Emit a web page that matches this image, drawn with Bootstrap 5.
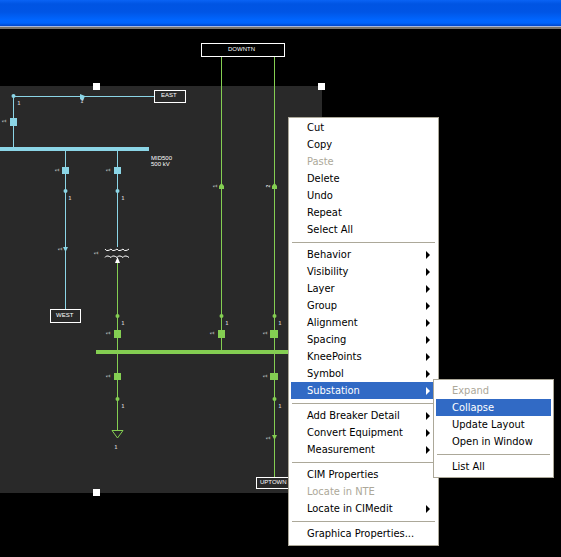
<!DOCTYPE html>
<html lang="en">
<head>
<meta charset="utf-8">
<meta name="viewport" content="width=device-width, initial-scale=1">
<title>Substation diagram</title>
<link href="https://cdn.jsdelivr.net/npm/bootstrap@5.3.0/dist/css/bootstrap.min.css" rel="stylesheet">
<style>
  body { background: #000; font-family: "DejaVu Sans Condensed", "Noto Sans", sans-serif; }
  .title-strip {
    height: 29px;
    background: linear-gradient(#0a63f5 0, #0054e3 4px, #0055e5 12px, #0066ff 20px, #0064fb 23px, #0046c8 26px);
    border-bottom: 2px solid #77736a;
    box-shadow: inset 0 -1px #a9b8dc;
  }
  .diagram { display: block; }
  .diagram text { font-family: "Liberation Sans", Arial, sans-serif; font-size: 6px; fill: #fff; }
  .diagram .tick { font-size: 5px; fill: #ccc; text-anchor: middle; font-weight: bold; }
  .ctx-menu {
    --bs-dropdown-min-width: 0;
    --bs-dropdown-padding-x: 2px;
    --bs-dropdown-padding-y: 2px;
    --bs-dropdown-font-size: 11px;
    --bs-dropdown-bg: #fff;
    --bs-dropdown-color: #000;
    --bs-dropdown-border-color: #aca899;
    --bs-dropdown-border-radius: 0;
    --bs-dropdown-divider-margin-y: 4px;
    --bs-dropdown-item-padding-x: 16px;
    --bs-dropdown-item-padding-y: 0;
    --bs-dropdown-link-color: #000;
    --bs-dropdown-link-hover-color: #fff;
    --bs-dropdown-link-hover-bg: #316ac5;
    --bs-dropdown-link-active-bg: #316ac5;
    --bs-dropdown-link-disabled-color: #aca899;
    line-height: 17px;
  }
  .ctx-menu .dropdown-item { height: 17px; padding-right: 6px; }
  .ctx-menu .dropdown-divider { height: 0; margin: 4px 1px 3px; border-top: 1px solid #aca899; opacity: 1; }
  .main-menu { left: 288px; top: 88px; width: 151px; padding-top: 1px; padding-bottom: 3px; }
  .sub-menu { left: 142px; top: -3px; width: 121px; }
  .has-sub::after { content: ""; border: 4px solid transparent; border-left-color: currentColor; border-right: 0; }
</style>
</head>
<body class="min-vh-100 overflow-hidden">
<header class="title-strip"></header>
<main class="position-relative">
  <svg class="diagram" width="322" height="470" viewBox="0 29 322 470" overflow="visible" role="img" aria-label="One-line diagram">
    <rect y="86" width="322" height="407" fill="#292929"/>
    <!-- 500 kV side -->
    <g stroke="#8bd5e6" fill="none">
      <path d="M13.500 121V96.500H154M13.500 96V147M65.500 150V309M117.500 150V247"/>
      <path d="M0 149H149" stroke-width="4"/>
    </g>
    <g fill="#8bd5e6">
      <path d="M10 118h7v8h-7zM62 167h7v7h-7zM114 167h7v7h-7zM80 94l5 2-2 5-3-2zM63 247h5l-2.500 5z"/>
      <circle cx="13.500" cy="96" r="2"/><circle cx="65.500" cy="191" r="2"/><circle cx="117.500" cy="191" r="2"/>
    </g>
    <!-- low-voltage side -->
    <g stroke="#84ce52" fill="none">
      <path d="M117.500 259V430M221.500 57V351M274.500 57V477"/>
      <path d="M96 352H300" stroke-width="4"/>
      <path d="M112 430.500H123L117.500 438z" fill="#292929"/>
    </g>
    <g fill="#84ce52">
      <path d="M114 330h7v8h-7zM218 330h7v8h-7zM270 330h8v8h-8zM114 373h7v7h-7zM270 373h8v7h-8zM219 189v-3l2.500-3 2.500 3v3zM272 189v-3l2.500-3 2.500 3v3zM272 435h5l-2.500 5z"/>
      <circle cx="117.500" cy="316" r="2"/><circle cx="221.500" cy="316" r="2"/><circle cx="274.500" cy="316" r="2"/>
      <circle cx="117.500" cy="399" r="2"/><circle cx="274.500" cy="399" r="2"/>
    </g>
    <!-- transformer -->
    <path d="M105 249q1 2 3 1.500t3-1.500q1 2 3 1.500t3-1.500q1 2 3 1.500t3-1.500q1 2 3 1.500t3-1.500M105 257.500q1-2 3-1.500t3 1.500q1-2 3-1.500t3 1.500q1-2 3-1.500t3 1.500q1-2 3-1.500t3 1.500" fill="none" stroke="#fff"/>
    <path d="M115 263l2.500-6 2.500 6z" fill="#fff"/>
    <g fill="none" stroke="#fff">
      <rect x="201.500" y="43.500" width="83" height="13" fill="#000"/>
      <rect x="154.500" y="90.500" width="31" height="12"/>
      <rect x="50.500" y="309.500" width="30" height="13"/>
      <rect x="256.500" y="477.500" width="42" height="11"/>
    </g>
    <text x="228" y="51">DOWNTN</text>
    <text x="161" y="97">EAST</text>
    <text x="56" y="317">WEST</text>
    <text x="260" y="484">UPTOWN</text>
    <text x="151" y="160">MID500</text>
    <text x="151" y="166">500 kV</text>
    <g>
      <text class="tick" x="19" y="105">1</text><text class="tick" x="82" y="103">1</text>
      <text class="tick" x="70" y="200">1</text><text class="tick" x="123" y="200">1</text>
      <text class="tick" x="123" y="325">1</text><text class="tick" x="227" y="325">1</text><text class="tick" x="280" y="325">1</text>
      <text class="tick" x="123" y="408">1</text><text class="tick" x="280" y="408">1</text><text class="tick" x="116" y="449">1</text>
      <text class="tick" transform="translate(6 121)rotate(-90)">1</text>
      <text class="tick" transform="translate(59 170)rotate(-90)">1</text>
      <text class="tick" transform="translate(110 170)rotate(-90)">1</text>
      <text class="tick" transform="translate(62 249)rotate(-90)">1</text>
      <text class="tick" transform="translate(98 253)rotate(-90)">1</text>
      <text class="tick" transform="translate(110 333)rotate(-90)">1</text>
      <text class="tick" transform="translate(214 333)rotate(-90)">1</text>
      <text class="tick" transform="translate(267 333)rotate(-90)">1</text>
      <text class="tick" transform="translate(110 376)rotate(-90)">1</text>
      <text class="tick" transform="translate(267 376)rotate(-90)">1</text>
      <text class="tick" transform="translate(270 438)rotate(-90)">1</text>
      <text class="tick" transform="translate(217 186)rotate(-90)">1</text>
      <text class="tick" transform="translate(270 186)rotate(-90)">2</text>
    </g>
    <!-- selection handles -->
    <path d="M93 83h7v7h-7zM318 83h7v7h-7zM93 489h7v7h-7z" fill="#fff"/>
  </svg>

  <ul class="dropdown-menu ctx-menu main-menu show">
    <li><button type="button" class="dropdown-item">Cut</button></li>
    <li><button type="button" class="dropdown-item">Copy</button></li>
    <li><button type="button" class="dropdown-item" disabled>Paste</button></li>
    <li><button type="button" class="dropdown-item">Delete</button></li>
    <li><button type="button" class="dropdown-item">Undo</button></li>
    <li><button type="button" class="dropdown-item">Repeat</button></li>
    <li><button type="button" class="dropdown-item">Select All</button></li>
    <li><hr class="dropdown-divider"></li>
    <li><button type="button" class="dropdown-item has-sub d-flex justify-content-between align-items-center">Behavior</button></li>
    <li><button type="button" class="dropdown-item has-sub d-flex justify-content-between align-items-center">Visibility</button></li>
    <li><button type="button" class="dropdown-item has-sub d-flex justify-content-between align-items-center">Layer</button></li>
    <li><button type="button" class="dropdown-item has-sub d-flex justify-content-between align-items-center">Group</button></li>
    <li><button type="button" class="dropdown-item has-sub d-flex justify-content-between align-items-center">Alignment</button></li>
    <li><button type="button" class="dropdown-item has-sub d-flex justify-content-between align-items-center">Spacing</button></li>
    <li><button type="button" class="dropdown-item has-sub d-flex justify-content-between align-items-center">KneePoints</button></li>
    <li><button type="button" class="dropdown-item has-sub d-flex justify-content-between align-items-center">Symbol</button></li>
    <li class="position-relative">
      <button type="button" class="dropdown-item active has-sub d-flex justify-content-between align-items-center" aria-expanded="true">Substation</button>
      <ul class="dropdown-menu ctx-menu sub-menu show">
        <li><button type="button" class="dropdown-item" disabled>Expand</button></li>
        <li><button type="button" class="dropdown-item active">Collapse</button></li>
        <li><button type="button" class="dropdown-item">Update Layout</button></li>
        <li><button type="button" class="dropdown-item">Open in Window</button></li>
        <li><hr class="dropdown-divider"></li>
        <li><button type="button" class="dropdown-item">List All</button></li>
      </ul>
    </li>
    <li><hr class="dropdown-divider"></li>
    <li><button type="button" class="dropdown-item has-sub d-flex justify-content-between align-items-center">Add Breaker Detail</button></li>
    <li><button type="button" class="dropdown-item has-sub d-flex justify-content-between align-items-center">Convert Equipment</button></li>
    <li><button type="button" class="dropdown-item has-sub d-flex justify-content-between align-items-center">Measurement</button></li>
    <li><hr class="dropdown-divider"></li>
    <li><button type="button" class="dropdown-item">CIM Properties</button></li>
    <li><button type="button" class="dropdown-item" disabled>Locate in NTE</button></li>
    <li><button type="button" class="dropdown-item has-sub d-flex justify-content-between align-items-center">Locate in CIMedit</button></li>
    <li><hr class="dropdown-divider"></li>
    <li><button type="button" class="dropdown-item">Graphica Properties...</button></li>
  </ul>
</main>
<script src="https://cdn.jsdelivr.net/npm/bootstrap@5.3.0/dist/js/bootstrap.bundle.min.js"></script>
</body>
</html>
